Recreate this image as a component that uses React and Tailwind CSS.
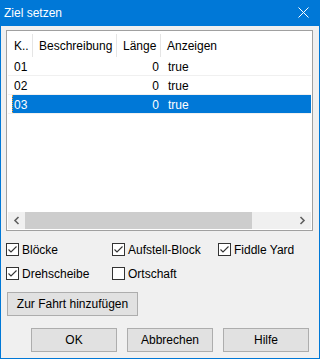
import React from "react";

const rows = [
  { k: "01", len: "0", show: "true" },
  { k: "02", len: "0", show: "true" },
  { k: "03", len: "0", show: "true", sel: true },
];

function Check({ checked }) {
  return (
    <span className="w-[13px] h-[13px] border border-[#333333] bg-white flex items-center justify-center shrink-0">
      {checked && (
        <svg width="11" height="11" viewBox="0 0 11 11">
          <path d="M1.5 5.5 L4 8 L9.5 2.5" fill="none" stroke="#333333" strokeWidth="1.1" />
        </svg>
      )}
    </span>
  );
}

function CB({ label, checked }) {
  return (
    <div className="flex items-center h-[13px]">
      <Check checked={checked} />
      <span className="ml-[3px] leading-none">{label}</span>
    </div>
  );
}

function Btn({ children, className }) {
  return (
    <div
      className={
        "h-[24px] bg-[#e1e1e1] border border-[#adadad] flex items-center justify-center " +
        (className || "")
      }
    >
      {children}
    </div>
  );
}

export default function App() {
  return (
    <div
      className="w-[320px] h-[359px] bg-[#0078d7] flex flex-col px-[1px] pb-[1px] text-[12px] text-black"
      style={{ fontFamily: '"Liberation Sans", Arial, sans-serif' }}
    >
      <div className="h-[26px] flex items-center justify-between pl-[3px] pr-[10px] text-white">
        <span className="pb-[1px]">Ziel setzen</span>
        <svg width="11" height="11" viewBox="0 0 11 11" className="mb-[1px]">
          <path d="M0.5 0.5 L10.5 10.5 M10.5 0.5 L0.5 10.5" stroke="white" strokeWidth="1" />
        </svg>
      </div>
      <div className="flex-1 bg-[#f0f0f0] flex flex-col pt-[4px] pl-[5px]">
        <div className="w-[307px] h-[201px] border border-[#a0a0a0] bg-white flex flex-col p-[1px] pb-0">
          <div className="h-[25px] flex items-stretch pt-[2px]">
            <div className="w-[25px] flex items-center pl-[6px] border-r border-[#e5e5e5]">K..</div>
            <div className="w-[84px] flex items-center pl-[6px] border-r border-[#e5e5e5]">Beschreibung</div>
            <div className="w-[44px] flex items-center pl-[6px] border-r border-[#e5e5e5]">Länge</div>
            <div className="flex-1 flex items-center pl-[6px]">Anzeigen</div>
          </div>
          {rows.map((r) => (
            <div key={r.k} className="h-[19px] border-b border-[#f0f0f0] flex items-stretch">
              <div
                className={
                  "flex-1 flex items-center pt-[1px] " +
                  (r.sel ? "ml-[4px] bg-[#0078d7] text-white border-l border-dotted border-[#f0a040]" : "ml-[4px]")
                }
              >
                <div className={r.sel ? "w-[21px] pl-[1px]" : "w-[22px] pl-[2px]"}>{r.k}</div>
                <div className="w-[128px] text-right pr-[3px]">{r.len}</div>
                <div className="pl-[6px]">{r.show}</div>
              </div>
            </div>
          ))}
          <div className="flex-1" />
          <div className="h-[17px] flex items-stretch bg-[#f0f0f0] mb-[1px]">
            <div className="w-[17px] flex items-center justify-center">
              <svg width="7" height="9" viewBox="0 0 7 9">
                <path d="M5.5 1 L2 4.5 L5.5 8" fill="none" stroke="#606060" strokeWidth="1.6" />
              </svg>
            </div>
            <div className="w-[227px] bg-[#cdcdcd]" />
            <div className="flex-1" />
            <div className="w-[17px] flex items-center justify-center">
              <svg width="7" height="9" viewBox="0 0 7 9">
                <path d="M1.5 1 L5 4.5 L1.5 8" fill="none" stroke="#606060" strokeWidth="1.6" />
              </svg>
            </div>
          </div>
        </div>
        <div className="grid grid-cols-[106px_106px_auto] gap-y-[11px] mt-[12px]">
          <CB label="Blöcke" checked />
          <CB label="Aufstell-Block" checked />
          <CB label="Fiddle Yard" checked />
          <CB label="Drehscheibe" checked />
          <CB label="Ortschaft" />
        </div>
        <div className="mt-[12px] ml-[1px]">
          <Btn className="w-[131px]">Zur Fahrt hinzufügen</Btn>
        </div>
        <div className="mt-[12px] ml-[25px] flex gap-[10px]">
          <Btn className="w-[86px]">OK</Btn>
          <Btn className="w-[86px]">Abbrechen</Btn>
          <Btn className="w-[86px]">Hilfe</Btn>
        </div>
      </div>
    </div>
  );
}
